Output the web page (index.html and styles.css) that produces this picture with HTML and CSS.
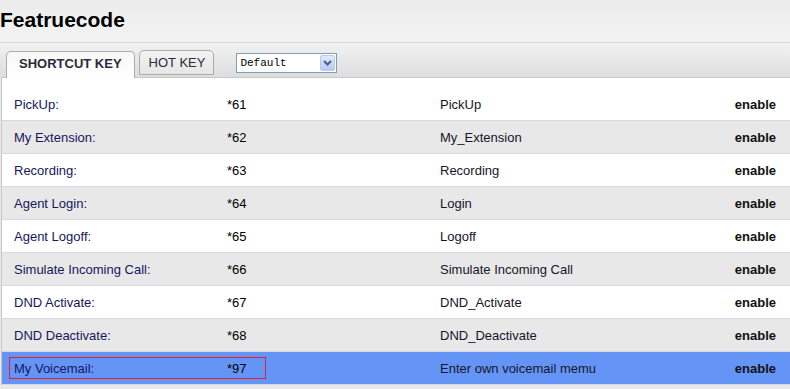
FILE: index.html
```html
<!DOCTYPE html>
<html lang="en">
<head>
    <meta charset="UTF-8">
    <title>Featruecode</title>
    <link rel="stylesheet" href="styles.css">
</head>
<body>
    <div class="page-head">
        <h1>Featruecode</h1>
    </div>

    <div class="tab-bar">
        <div class="tab active">SHORTCUT KEY</div>
        <div class="tab">HOT KEY</div>
        <div class="select-box">
            <span class="select-value">Default</span>
            <span class="select-arrow">
                <svg width="9" height="6" viewBox="0 0 9 6">
                    <path d="M1 1 L4.5 4.5 L8 1" fill="none" stroke="#4a5d86" stroke-width="2"/>
                </svg>
            </span>
        </div>
    </div>

    <div class="panel">
        <div class="code-list">
            <div class="code-row">
                <span class="name">PickUp:</span>
                <span class="code">*61</span>
                <span class="desc">PickUp</span>
                <span class="state">enable</span>
            </div>
            <div class="code-row">
                <span class="name">My Extension:</span>
                <span class="code">*62</span>
                <span class="desc">My_Extension</span>
                <span class="state">enable</span>
            </div>
            <div class="code-row">
                <span class="name">Recording:</span>
                <span class="code">*63</span>
                <span class="desc">Recording</span>
                <span class="state">enable</span>
            </div>
            <div class="code-row">
                <span class="name">Agent Login:</span>
                <span class="code">*64</span>
                <span class="desc">Login</span>
                <span class="state">enable</span>
            </div>
            <div class="code-row">
                <span class="name">Agent Logoff:</span>
                <span class="code">*65</span>
                <span class="desc">Logoff</span>
                <span class="state">enable</span>
            </div>
            <div class="code-row">
                <span class="name">Simulate Incoming Call:</span>
                <span class="code">*66</span>
                <span class="desc">Simulate Incoming Call</span>
                <span class="state">enable</span>
            </div>
            <div class="code-row">
                <span class="name">DND Activate:</span>
                <span class="code">*67</span>
                <span class="desc">DND_Activate</span>
                <span class="state">enable</span>
            </div>
            <div class="code-row">
                <span class="name">DND Deactivate:</span>
                <span class="code">*68</span>
                <span class="desc">DND_Deactivate</span>
                <span class="state">enable</span>
            </div>
            <div class="code-row selected">
                <span class="focus-box"></span>
                <span class="name">My Voicemail:</span>
                <span class="code">*97</span>
                <span class="desc">Enter own voicemail memu</span>
                <span class="state">enable</span>
            </div>
        </div>
    </div>
</body>
</html>
```

FILE: styles.css
```css
body {
    margin: 0;
    font-family: "Liberation Sans", Arial, sans-serif;
    font-size: 13px;
    background-color: #e8e8e8;
    color: #000000;
}

.page-head {
    height: 42px;
    border-bottom: 1px solid #d6d6d6;
    background: linear-gradient(#ececec, #f3f3f3);
}

.page-head h1 {
    margin: 0;
    padding-top: 8px;
    font-size: 21px;
    line-height: 24px;
    font-weight: bold;
    color: #000000;
}

.tab-bar {
    height: 34px;
    display: flex;
    align-items: flex-end;
    padding-left: 6px;
    gap: 4px;
    background: linear-gradient(#f2f2f2, #dddddd);
    position: relative;
    z-index: 1;
}

.tab {
    height: 23px;
    line-height: 23px;
    padding: 0 8px 0 9px;
    border: 1px solid #ababab;
    border-radius: 5px 5px 0 0;
    background: linear-gradient(#f2f2f2, #e6e6e6);
    color: #2b2b3b;
    margin-bottom: 2px;
}

.tab.active {
    height: 26px;
    line-height: 24px;
    padding: 0 12px;
    font-weight: bold;
    border-bottom: none;
    background: linear-gradient(#f8f8f8, #ffffff);
    margin-bottom: -1px;
}

.select-box {
    width: 99px;
    height: 18px;
    margin-left: 18px;
    margin-bottom: 4px;
    border: 1px solid #7f9db9;
    background-color: #ffffff;
    display: flex;
    align-items: center;
    justify-content: space-between;
}

.select-value {
    font-family: "Liberation Mono", "Courier New", monospace;
    font-size: 11px;
    padding-left: 3px;
    color: #000000;
}

.select-arrow {
    width: 15px;
    height: 16px;
    margin-right: 1px;
    border: 1px solid #b9c9ef;
    border-radius: 2px;
    background: linear-gradient(#e1e9fd, #b7c9f6);
    box-sizing: border-box;
    display: flex;
    align-items: center;
    justify-content: center;
}

.panel {
    margin-left: 1px;
    border-left: 1px solid #c8c8c8;
    border-top: 1px solid #c8c8c8;
    background-color: #ffffff;
    padding-top: 10px;
}

.code-row {
    display: grid;
    grid-template-columns: 213px 213px 1fr auto;
    align-items: center;
    height: 32px;
    padding: 0 14px 0 12px;
    border-bottom: 1px solid #d6dadf;
    position: relative;
}

.code-row:nth-child(even) {
    background-color: #e8e8e8;
}

.code-row.selected {
    background-color: #6495f6;
}

.name {
    color: #16165e;
}

.code {
    color: #000000;
}

.desc {
    color: #15152a;
}

.state {
    font-weight: bold;
    color: #111111;
}

.focus-box {
    position: absolute;
    left: 7px;
    top: 5px;
    width: 255px;
    height: 20px;
    border: 1px solid #e0202a;
}
```
